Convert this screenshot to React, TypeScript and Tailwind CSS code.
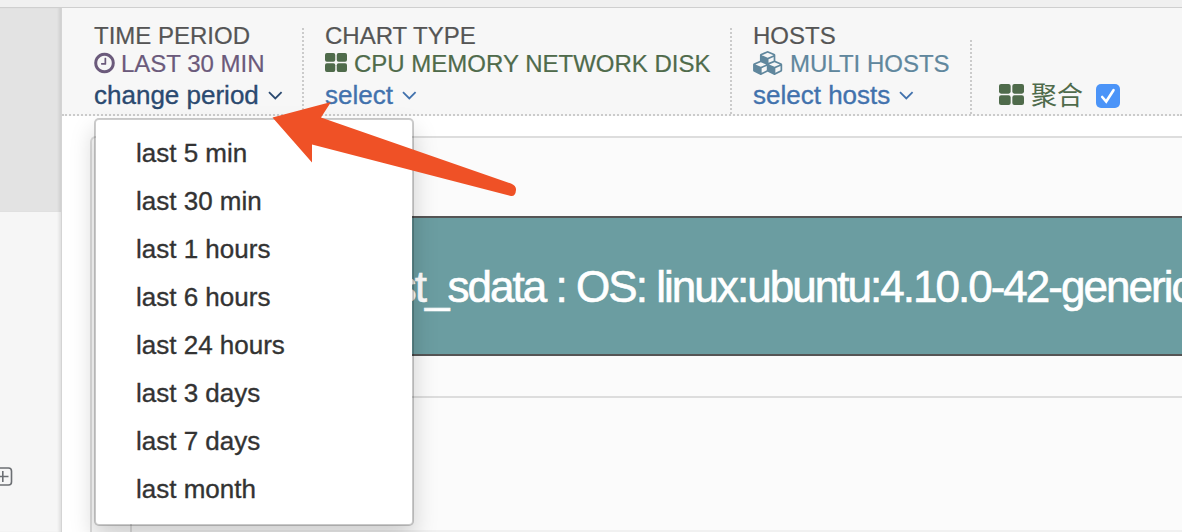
import type { ReactNode } from "react";

const periods = [
  "last 5 min",
  "last 30 min",
  "last 1 hours",
  "last 6 hours",
  "last 24 hours",
  "last 3 days",
  "last 7 days",
  "last month",
];

function ClockIcon() {
  return (
    <svg className="mb-0.5 h-6 w-[21px] shrink-0" viewBox="0 0 1536 1792" fill="currentColor">
      <path d="M896 544v448q0 14-9 23t-23 9h-320q-14 0-23-9t-9-23v-64q0-14 9-23t23-9h224v-352q0-14 9-23t23-9h64q14 0 23 9t9 23zm416 352q0-148-73-273t-198-198-273-73-273 73-198 198-73 273 73 273 198 198 273 73 273-73 198-198 73-273zm224 0q0 209-103 385.5t-279.5 279.5-385.5 103-385.5-103-279.5-279.5-103-385.5 103-385.5 279.5-279.5 385.5-103 385.5 103 279.5 279.5 103 385.5z" />
    </svg>
  );
}

function GridIcon({ className }: { className: string }) {
  return (
    <svg className={className} viewBox="0 0 24 20" preserveAspectRatio="none" fill="currentColor">
      <rect x="0" y="0" width="11.2" height="9.2" rx="2" />
      <rect x="12.8" y="0" width="11.2" height="9.2" rx="2" />
      <rect x="0" y="10.8" width="11.2" height="9.2" rx="2" />
      <rect x="12.8" y="10.8" width="11.2" height="9.2" rx="2" />
    </svg>
  );
}

function CubesIcon() {
  return (
    <svg className="mb-0.5 h-6 w-[31px] shrink-0" viewBox="0 0 2304 1792" fill="currentColor">
      <path d="M640 1632l384-192v-314l-384 164v342zm-64-454l404-173-404-173-404 173zm1088 454l384-192v-314l-384 164v342zm-64-454l404-173-404-173-404 173zm-448-293l384-165v-266l-384 164v267zm-64-379l441-189-441-189-441 189zm1088 518v416q0 36-19 67t-52 47l-448 224q-25 14-57 14t-57-14l-448-224q-4-2-7-4-2 2-7 4l-448 224q-25 14-57 14t-57-14l-448-224q-33-16-52-47t-19-67v-416q0-38 21.5-70t56.5-48l434-186v-400q0-38 21.5-70t56.5-48l448-192q23-10 50-10t50 10l448 192q35 16 56.500 48t21.500 70v400l434 186q36 16 57 48t21 70z" />
    </svg>
  );
}

function Toggle({ label, className }: { label: string; className: string }) {
  return (
    <div className={`-mt-px flex h-9 items-center text-[26px] leading-9 [-webkit-text-stroke:0.35px] ${className}`}>
      <span>{label}</span>
      <svg className="ml-[9px] h-[9px] w-[15px]" viewBox="0 0 15 9" fill="none" stroke="currentColor" strokeWidth="1.8">
        <path d="M1 1.2l6.3 6.300L13.600 1.200" />
      </svg>
    </div>
  );
}

function Column({ title, className, children }: { title: string; className: string; children: ReactNode }) {
  return (
    <div className={`h-[86px] shrink-0 self-end ${className}`}>
      <div className="-mt-1.5 h-7 text-2xl leading-7 text-[#555] [-webkit-text-stroke:0.2px]">{title}</div>
      {children}
    </div>
  );
}

function PeriodMenu() {
  return (
    <ul className="absolute left-[94px] top-[118px] h-[408px] w-80 rounded-[5px] border-2 border-black/20 bg-white bg-clip-padding pt-[9px] shadow-[0_12px_24px_rgba(0,0,0,0.175)]">
      {periods.map((p) => (
        <li key={p} className="h-12 pl-10 text-[26px] leading-[48px] text-[#333] [-webkit-text-stroke:0.35px]">
          {p}
        </li>
      ))}
    </ul>
  );
}

export default function App() {
  return (
    <div className="relative flex h-[532px] w-[1182px] flex-col overflow-hidden whitespace-nowrap bg-white font-['Liberation_Sans','Noto_Sans_CJK_SC',sans-serif]">
      <div className="h-2 shrink-0 border-b border-[#cfcfcf] bg-[#f0f0f0]" />
      <div className="flex min-h-0 flex-1">
        <aside className="w-[62px] shrink-0 border-r border-[#d4d4d4] bg-[#f6f6f6] shadow-[inset_-3px_0_3px_-1px_rgba(0,0,0,0.09)]">
          <div className="h-[204px] bg-[#e3e3e3] shadow-[inset_-3px_0_3px_-1px_rgba(0,0,0,0.09)]" />
          <svg className="mt-[254px] h-5 w-[13px]" viewBox="0 0 13 20" fill="none" stroke="#6c6f73" strokeWidth="1.6">
            <rect x="-6" y="2" width="17.5" height="17" rx="3" />
            <path d="M-2 10.5H8.5M2.8 5v11" />
          </svg>
        </aside>
        <main className="flex min-w-0 flex-1 flex-col">
          <header className="flex h-[108px] shrink-0 border-b-2 border-dotted border-[#cbcbcb] bg-[#f7f7f7] pl-8">
            <Column title="TIME PERIOD" className="w-[210px] border-r-2 border-dotted border-[#cbcbcb]">
              <div className="flex h-7 items-center gap-[6px] text-2xl leading-7 text-[#6b5a7b] [-webkit-text-stroke:0.2px]">
                <ClockIcon />
                LAST 30 MIN
              </div>
              <Toggle label="change period" className="text-[#2b4a70]" />
            </Column>
            <Column title="CHART TYPE" className="w-[428px] border-r-2 border-dotted border-[#cbcbcb] pl-[21px]">
              <div className="flex h-7 items-center gap-[7px] text-2xl leading-7 text-[#4f6b4b] [-webkit-text-stroke:0.2px]">
                <GridIcon className="mb-[3px] h-[19px] w-[22px] shrink-0" />
                CPU MEMORY NETWORK DISK
              </div>
              <Toggle label="select" className="text-[#4272ad]" />
            </Column>
            <Column title="HOSTS" className="w-[238px] pl-[21px]">
              <div className="flex h-7 items-center gap-[6px] text-2xl leading-7 text-[#60879d] [-webkit-text-stroke:0.2px]">
                <CubesIcon />
                MULTI HOSTS
              </div>
              <Toggle label="select hosts" className="text-[#4272ad]" />
            </Column>
            <div className="flex h-[74px] items-end self-end border-l-2 border-dotted border-[#cbcbcb] pb-[6px] pl-[27px] text-[#4f6b4b]">
              <GridIcon className="mb-[3px] h-[21px] w-[25px]" />
              <span className="-mb-px ml-[7px] h-[26px] text-[26px] leading-[26px]">聚合</span>
              <span className="ml-[13px] flex size-6 items-center justify-center rounded-[5px] bg-[#4b94f8]">
                <svg className="size-6" viewBox="0 0 24 24" fill="none" stroke="white" strokeWidth="2.6" strokeLinecap="round">
                  <path d="M6.200 13l4 4.500L17.500 6.200" />
                </svg>
              </span>
            </div>
          </header>
          <section className="ml-7 mt-5 flex min-h-0 flex-1 flex-col rounded-tl-md border-l-2 border-t-2 border-[#ddd] bg-[#fbfbfb]">
            <div className="ml-[38px] mt-[78px] h-[140px] shrink-0 border-y-2 border-[#555] bg-[#6b9da1] pl-[232px] text-[44px] leading-[138px] tracking-[-1.97px] text-white [-webkit-text-stroke:0.6px]">
              test_sdata : OS: linux:ubuntu:4.10.0-42-generic
            </div>
            <div className="ml-[38px] mt-10 flex-1 border-l-2 border-t-2 border-[#ddd]">
              <div className="ml-[38px] mt-[132px] h-2 bg-[#f1f1f1]" />
            </div>
          </section>
        </main>
      </div>
      <PeriodMenu />
      <svg className="absolute left-[260px] top-[90px] h-[120px] w-[270px]" viewBox="260 90 270 120" fill="#ef5126">
        <path d="M272.5 117.5L331 102L321 117.5L511 183.5Q516.5 186 516 190Q515.500 196.500 511 196L312 144.500V162.500Z" />
      </svg>
    </div>
  );
}
